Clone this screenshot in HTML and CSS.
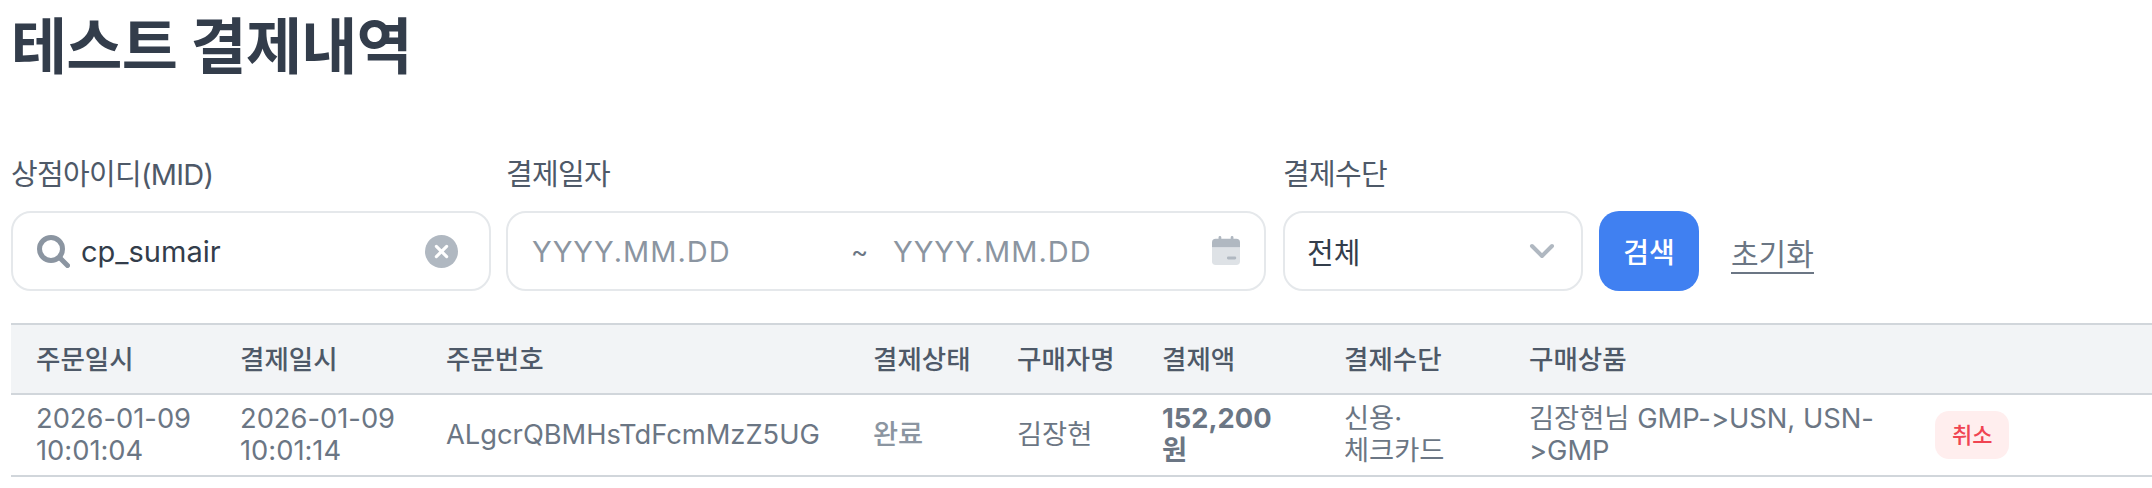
FILE: index.html
```html
<!DOCTYPE html>
<html lang="ko">
<head>
  <meta charset="UTF-8" />
  <title>테스트 결제내역</title>
  <link rel="stylesheet" href="styles.css">
</head>
<body>
  <h1 class="page-title">테스트 결제내역</h1>

  <form class="filter-bar">
    <div class="field field-mid">
      <label class="field-label">상점아이디(MID)</label>
      <div class="control control-mid">
        <svg class="icon-search" width="33" height="33" viewBox="0 0 33 33" fill="none" stroke="#8b95a1" stroke-width="5" stroke-linecap="round">
          <circle cx="14" cy="14" r="11.500" />
          <path d="M23 23L30.500 30.500" />
        </svg>
        <input class="control-input" type="text" value="cp_sumair">
        <svg class="icon-clear" width="33" height="33" viewBox="0 0 32 32" fill="none">
          <circle cx="16" cy="16" r="16" fill="#b0b8c1" />
          <path d="M11 11L21 21M21 11L11 21" stroke="#fff" stroke-width="3" stroke-linecap="round" />
        </svg>
      </div>
    </div>

    <div class="field field-date">
      <label class="field-label">결제일자</label>
      <div class="control">
        <input class="control-input date-input date-from" type="text" placeholder="YYYY.MM.DD">
        <span class="date-sep">~</span>
        <input class="control-input date-input" type="text" placeholder="YYYY.MM.DD">
        <svg class="icon-calendar" width="28" height="30" viewBox="0 0 30 32">
          <path d="M0 12V27a4 4 0 0 0 4 4H26a4 4 0 0 0 4-4V12Z" fill="#dee2e6" />
          <path d="M0 12V7a4 4 0 0 1 4-4H7V1.500a1.500 1.500 0 0 1 3 0V3H20V1.500a1.500 1.500 0 0 1 3 0V3H26a4 4 0 0 1 4 4V12Z" fill="#b0b8c1" />
          <rect x="16" y="22" width="10" height="3" rx="1.500" fill="#b0b8c1" />
        </svg>
      </div>
    </div>

    <div class="field field-method">
      <label class="field-label">결제수단</label>
      <div class="control control-method">
        <span class="select-value">전체</span>
        <svg class="icon-chevron" width="26" height="16" viewBox="0 0 26 16" fill="none" stroke="#b0b8c1" stroke-width="4" stroke-linecap="round" stroke-linejoin="round">
          <path d="M3 3L13 13L23 3" />
        </svg>
      </div>
    </div>

    <button class="btn-search" type="button">검색</button>
    <a class="btn-reset" href="#">초기화</a>
  </form>

  <table class="pay-table">
    <colgroup>
      <col class="col-ordered">
      <col class="col-paid">
      <col class="col-number">
      <col class="col-status">
      <col class="col-buyer">
      <col class="col-amount">
      <col class="col-method">
      <col class="col-product">
      <col>
    </colgroup>
    <thead>
      <tr>
        <th>주문일시</th>
        <th>결제일시</th>
        <th>주문번호</th>
        <th>결제상태</th>
        <th>구매자명</th>
        <th>결제액</th>
        <th>결제수단</th>
        <th>구매상품</th>
        <th></th>
      </tr>
    </thead>
    <tbody>
      <tr>
        <td class="cell-date">2026-01-09 10:01:04</td>
        <td class="cell-date">2026-01-09 10:01:14</td>
        <td>ALgcrQBMHsTdFcmMzZ5UG</td>
        <td class="cell-status">완료</td>
        <td>김장현</td>
        <td class="cell-amount">152,200 원</td>
        <td>신용·<br>체크카드</td>
        <td>김장현님 GMP-&gt;USN, USN-&gt;GMP</td>
        <td><span class="badge-cancel">취소</span></td>
      </tr>
    </tbody>
  </table>
</body>
</html>
```

FILE: styles.css
```css
* { margin: 0; padding: 0; box-sizing: border-box; }

html, body {
  height: 100%;
  overflow: hidden;
  background: #fff;
  font-family: Inter, "Noto Sans CJK KR", sans-serif;
  font-variant-ligatures: none;
  color: #4e5968;
}

body { padding: 9px 0 0 11px; }

.page-title {
  font-size: 61px;
  line-height: 76px;
  font-weight: 700;
  color: #333d4b;
  letter-spacing: -0.8px;
}

.filter-bar {
  display: flex;
  align-items: flex-end;
  margin-top: 72px;
}

.field { display: flex; flex-direction: column; }
.field-mid { width: 480px; margin-right: 15px; }
.field-date { width: 760px; margin-right: 17px; }
.field-method { width: 300px; margin-right: 16px; }

.field-label {
  font-size: 29px;
  line-height: 36px;
  margin-bottom: 18px;
  letter-spacing: -0.7px;
}

.control {
  display: flex;
  align-items: center;
  height: 80px;
  padding: 0 24px;
  border: 2px solid #e5e8eb;
  border-radius: 20px;
  background: #fff;
}
.control-mid { padding-right: 31px; }
.control-method { padding: 0 26px 0 22px; }

.control-input {
  flex: 1;
  min-width: 0;
  border: none;
  outline: none;
  background: none;
  font: inherit;
  font-size: 29px;
  color: #333d4b;
}
.control-input::placeholder { color: #8b95a1; opacity: 1; }

.icon-search { margin-right: 11px; flex: none; }
.icon-clear { flex: none; }
.icon-calendar { flex: none; }

.date-input { letter-spacing: 1px; }
.date-from { flex: none; width: 319px; }
.date-sep {
  flex: none;
  width: 42px;
  font-size: 26px;
  color: #6b7684;
}

.select-value {
  flex: 1;
  font-size: 29px;
  color: #333d4b;
}

.btn-search {
  width: 100px;
  height: 80px;
  border: none;
  border-radius: 20px;
  background: #4080f1;
  color: #fff;
  font: inherit;
  font-size: 28px;
  font-weight: 500;
}

.btn-reset {
  margin: 0 0 17px 32px;
  font-size: 30px;
  line-height: 36px;
  color: #6b7684;
  text-decoration: none;
  border-bottom: 2px solid #6b7684;
}

.pay-table {
  width: 2141px;
  margin-top: 32px;
  table-layout: fixed;
  border-collapse: collapse;
  font-size: 27.300px;
  line-height: 32px;
  color: #6b7684;
}

.col-ordered { width: 204px; }
.col-paid { width: 206px; }
.col-number { width: 427px; }
.col-status { width: 144px; }
.col-buyer { width: 145px; }
.col-amount { width: 182px; }
.col-method { width: 185px; }
.col-product { width: 406px; }

.pay-table th {
  height: 70px;
  padding: 0 25px;
  text-align: left;
  white-space: nowrap;
  font-size: 26.500px;
  font-weight: 500;
  color: #4e5968;
  background: #f2f4f6;
  border-top: 2px solid #d1d6db;
  border-bottom: 2px solid #d1d6db;
}

.pay-table td {
  height: 82px;
  padding: 0 25px;
  border-bottom: 2px solid #d1d6db;
}

.pay-table .cell-date { padding-right: 0; }
.cell-status { color: #8b95a1; font-weight: 500; }
.cell-amount { font-weight: 700; }

.badge-cancel {
  display: inline-block;
  padding: 8px 17px;
  border-radius: 14px;
  background: #ffeeee;
  color: #f04452;
  font-size: 22px;
  line-height: 32px;
  font-weight: 500;
}
```
